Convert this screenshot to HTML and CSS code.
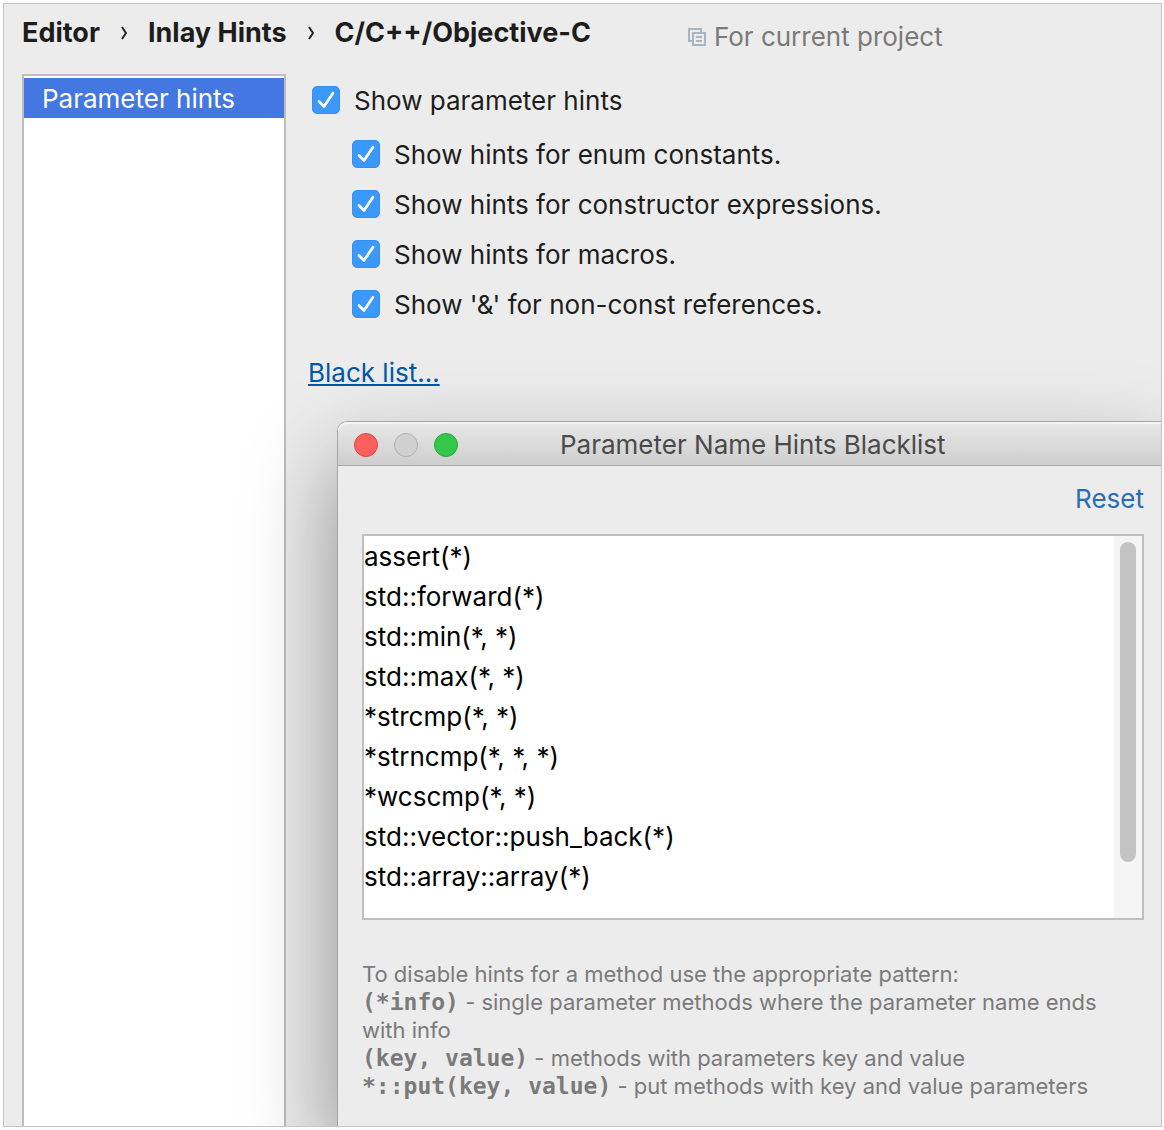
FILE: index.html
```html
<!DOCTYPE html>
<html lang="en">
<head>
<meta charset="utf-8">
<title>Inlay Hints</title>
<link rel="stylesheet" href="styles.css">
</head>
<body>
<svg class="defs" aria-hidden="true">
  <symbol id="tick" viewBox="0 0 28 28">
    <path d="M7 16.200L12 21.200L21 8" fill="none" stroke="#1f6fc4" stroke-opacity=".5" stroke-width="2.600" stroke-linecap="round" stroke-linejoin="round"/>
    <path d="M7 15.500L12 20.500L21 7.300" fill="none" stroke="#fff" stroke-width="2.800" stroke-linecap="round" stroke-linejoin="round"/>
  </symbol>
</svg>
<div class="settings">
  <header class="top">
    <nav class="crumbs" aria-label="Breadcrumb">
      <span>Editor</span>
      <svg class="chevron" viewBox="0 0 6 14"><path d="M1 1L5 7L1 13" fill="none" stroke="#222" stroke-width="2"/></svg>
      <span>Inlay Hints</span>
      <svg class="chevron" viewBox="0 0 6 14"><path d="M1 1L5 7L1 13" fill="none" stroke="#222" stroke-width="2"/></svg>
      <span>C/C++/Objective-C</span>
    </nav>
    <div class="scope">
      <svg class="copy" viewBox="0 0 18 18"><path d="M4 13H1V1H13V4M5 5H17V17H5ZM8 9H14M8 13H14" fill="none" stroke="#a9b6bf" stroke-width="2"/></svg>
      <span>For current project</span>
    </div>
  </header>
  <div class="body">
    <ul class="list">
      <li class="item">Parameter hints</li>
    </ul>
    <main class="pane">
      <div class="options">
        <label class="option"><span class="box"><input type="checkbox" checked><svg><use href="#tick"/></svg></span><span class="caption">Show parameter hints</span></label>
        <div class="nested">
          <label class="option"><span class="box"><input type="checkbox" checked><svg><use href="#tick"/></svg></span><span class="caption">Show hints for enum constants.</span></label>
          <label class="option"><span class="box"><input type="checkbox" checked><svg><use href="#tick"/></svg></span><span class="caption">Show hints for constructor expressions.</span></label>
          <label class="option"><span class="box"><input type="checkbox" checked><svg><use href="#tick"/></svg></span><span class="caption">Show hints for macros.</span></label>
          <label class="option"><span class="box"><input type="checkbox" checked><svg><use href="#tick"/></svg></span><span class="caption">Show '&amp;' for non-const references.</span></label>
        </div>
        <a class="blacklist" href="#dialog">Black list...</a>
      </div>
      <section class="dialog" id="dialog" role="dialog" aria-labelledby="title">
        <div class="titlebar">
          <div class="lights">
            <button class="light close" aria-label="Close"></button>
            <button class="light minimize" aria-label="Minimize" disabled></button>
            <button class="light maximize" aria-label="Zoom"></button>
          </div>
          <h2 class="title" id="title">Parameter Name Hints Blacklist</h2>
        </div>
        <div class="content">
          <a class="reset" href="#reset">Reset</a>
          <div class="editor">
            <textarea class="patterns" rows="9" spellcheck="false" aria-label="Patterns">assert(*)
std::forward(*)
std::min(*, *)
std::max(*, *)
*strcmp(*, *)
*strncmp(*, *, *)
*wcscmp(*, *)
std::vector::push_back(*)
std::array::array(*)</textarea>
            <div class="track"><div class="thumb"></div></div>
          </div>
          <div class="help">
            <p>To disable hints for a method use the appropriate pattern:</p>
            <p><code>(*info)</code> - single parameter methods where the parameter name ends with info</p>
            <p><code>(key, value)</code> - methods with parameters key and value</p>
            <p><code>*::put(key, value)</code> - put methods with key and value parameters</p>
          </div>
        </div>
      </section>
    </main>
  </div>
</div>
</body>
</html>
```

FILE: styles.css
```css
* { box-sizing: border-box; margin: 0; padding: 0; }

body {
  padding: 3px 2px 3px 3px;
  background: #fff;
  color: #1d1d1d;
  font: 26px/32px Inter, "Liberation Sans", sans-serif;
}

.defs { position: absolute; width: 0; height: 0; }

.settings {
  display: flex;
  flex-direction: column;
  min-height: calc(100vh - 6px);
  border: 1px solid #c4c4c4;
  background: #ececec;
  overflow: hidden;
}

.top {
  display: flex;
  gap: 97px;
  padding: 13px 18px 0;
  height: 70px;
}

.crumbs {
  display: flex;
  align-items: center;
  gap: 21px;
  height: 32px;
  font-size: 27px;
  font-weight: 700;
  white-space: nowrap;
}

.chevron { width: 6px; height: 14px; }

.scope {
  display: flex;
  align-items: center;
  gap: 8px;
  height: 40px;
  color: #7a7a7a;
  white-space: nowrap;
}

.copy { width: 18px; height: 18px; }

.body { display: flex; flex: 1; }

.list {
  flex: none;
  width: 264px;
  margin-left: 18px;
  padding-top: 2px;
  border: 2px solid #bdbdbd;
  border-bottom: 0;
  background: #fff;
  list-style: none;
}

.item {
  height: 40px;
  padding-left: 18px;
  background: #4477e2;
  color: #fff;
  line-height: 42px;
}

.pane {
  display: flex;
  flex: 1;
  flex-direction: column;
  min-width: 0;
}

.options { height: 347px; padding: 10px 0 0 22px; }

.option {
  display: flex;
  align-items: center;
  gap: 14px;
  height: 32px;
  padding-left: 4px;
}

.caption { padding-top: 2px; }

.box { display: grid; width: 28px; height: 28px; }
.box > * { grid-area: 1 / 1; width: 28px; height: 28px; }
.box input {
  appearance: none;
  border: 1px solid #3590f3;
  border-radius: 5px;
  background: #3b99fc;
}
.box svg { pointer-events: none; }

.nested {
  display: flex;
  flex-direction: column;
  gap: 18px;
  padding: 22px 0 37px 40px;
}

.blacklist {
  color: #0058a8;
  text-decoration-thickness: 2px;
  text-underline-offset: 2px;
}

.dialog {
  flex: 1;
  margin-left: 51px;
  border: 1px solid #a6a6a6;
  border-width: 1px 0 0 1px;
  border-radius: 10px 0 0 0;
  background: #ececec;
  box-shadow: 0 40px 90px rgba(0, 0, 0, .4);
}

.titlebar {
  display: flex;
  align-items: center;
  height: 44px;
  padding: 2px 16px 0;
  border-bottom: 1px solid #a8a8a8;
  border-radius: 9px 0 0 0;
  background: linear-gradient(#e8e8e8, #cecece);
  box-shadow: inset 0 2px #f4f4f4;
}

.lights { display: flex; gap: 16px; }

.light { width: 24px; height: 24px; border: 1px solid; border-radius: 50%; }
.close { border-color: #e0443e; background: #fc605c; }
.minimize { border-color: #b0b0b0; background: #d0d0d0; }
.maximize { border-color: #29a73a; background: #34c84a; }

.title {
  margin-left: 102px;
  color: #4a4a4a;
  font-size: 26px;
  font-weight: 400;
}

.content {
  display: flex;
  flex-direction: column;
  padding: 17px 17px 24px 24px;
}

.reset { align-self: flex-end; color: #2a6db5; text-decoration: none; }

.editor {
  display: flex;
  height: 386px;
  margin-top: 19px;
  border: 2px solid #bfbfbf;
  background: #fff;
}

.patterns {
  flex: 1;
  min-width: 0;
  padding-top: 1px;
  border: 0;
  outline: 0;
  background: #fff;
  color: #000;
  font: inherit;
  line-height: 40px;
  resize: none;
  overflow: hidden;
}

.track { width: 28px; padding: 6px; background: #f5f5f5; }
.thumb { width: 16px; height: 320px; border-radius: 8px; background: #c3c3c3; }

.help {
  margin-top: 40px;
  color: #7a7a7a;
  font-size: 22px;
  line-height: 28px;
}

.help code {
  font-family: "DejaVu Sans Mono", monospace;
  font-size: 23px;
  font-weight: 700;
  line-height: 1;
}
```
